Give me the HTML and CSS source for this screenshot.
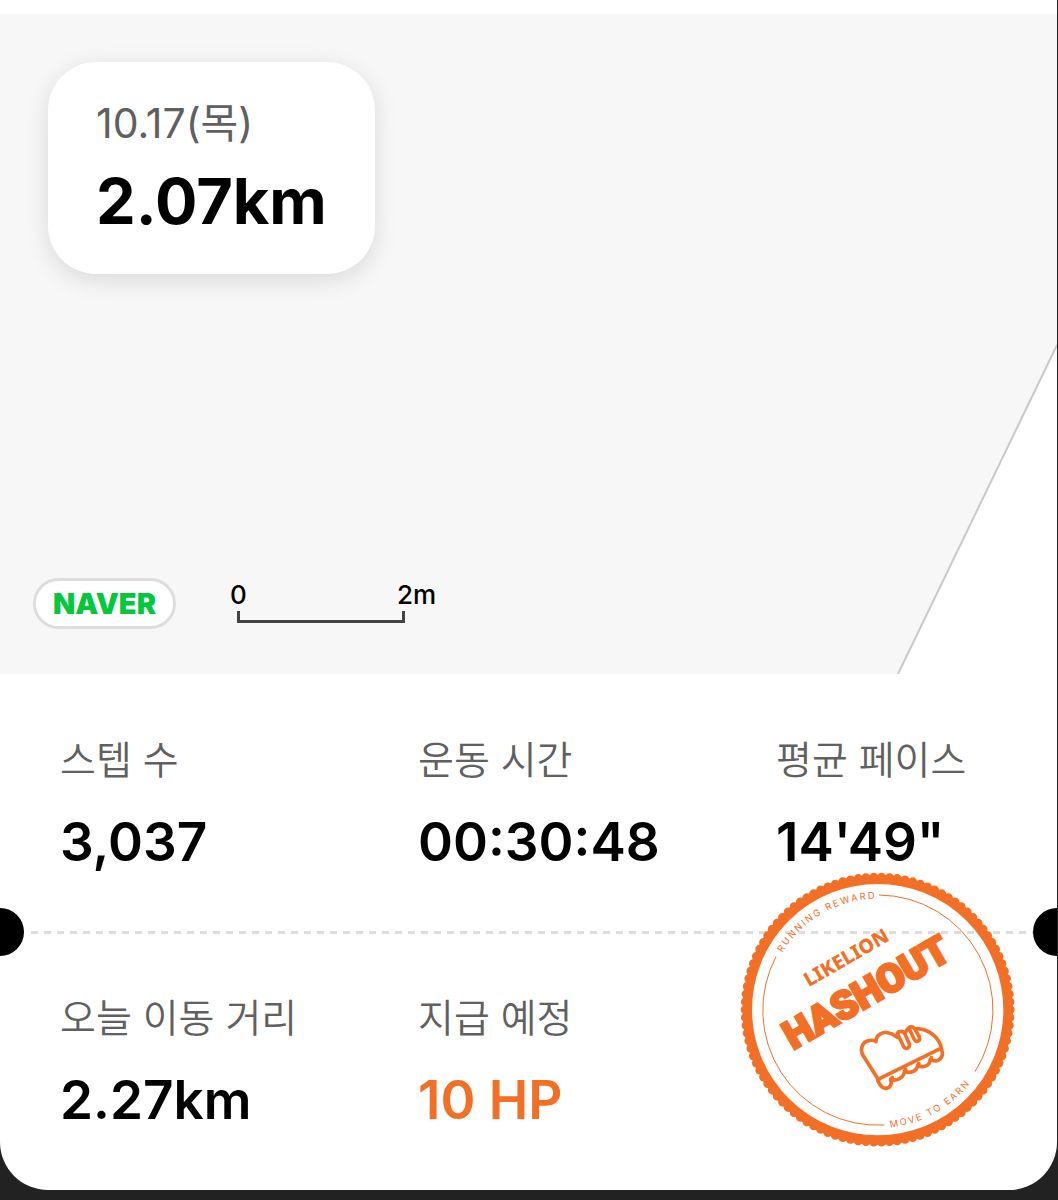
FILE: index.html
```html
<!DOCTYPE html>
<html lang="ko">
<head>
<meta charset="utf-8">
<meta name="viewport" content="width=device-width, initial-scale=1">
<title>10.17(목) 2.07km</title>
<link rel="stylesheet" href="styles.css">
</head>
<body>
<main class="ticket">
  <section class="map">
    <svg class="map-land" viewBox="0 0 160 330" aria-hidden="true">
      <path d="M1 330 160 1V330Z" fill="#fff"/>
      <path d="M1 330 160 1" fill="none" stroke="#cbc8c5" stroke-width="2"/>
    </svg>
    <header class="summary">
      <p class="summary-date">10.17(목)</p>
      <h1 class="summary-distance">2.07km</h1>
    </header>
    <footer class="map-legend">
      <span class="naver">NAVER</span>
      <div class="scale">
        <div class="scale-labels"><span>0</span><span class="scale-end">2m</span></div>
        <div class="scale-bar"></div>
      </div>
    </footer>
  </section>

  <dl class="stats">
    <div class="stat"><dt>스텝 수</dt><dd>3,037</dd></div>
    <div class="stat"><dt>운동 시간</dt><dd>00:30:48</dd></div>
    <div class="stat"><dt>평균 페이스</dt><dd>14'49"</dd></div>
  </dl>

  <div class="perforation"><span class="notch"></span><span class="dashes"></span><span class="notch notch-right"></span></div>

  <section class="reward">
    <dl class="stats stats-reward">
      <div class="stat"><dt>오늘 이동 거리</dt><dd>2.27km</dd></div>
      <div class="stat"><dt>지급 예정</dt><dd class="points">10 HP</dd></div>
    </dl>
    <svg class="stamp" viewBox="0 0 900 900" role="img" aria-label="LIKELION HASHOUT">
      <defs>
        <path id="arc-top" d="M110 449A333 333 0 0 1 776 449"/>
        <path id="arc-bottom" d="M88 449A355 355 0 0 0 798 449"/>
      </defs>
      <g fill="none" stroke="#f36f25">
        <circle cx="443" cy="449" r="391" stroke-width="28"/>
        <circle cx="443" cy="449" r="398" stroke-width="26" stroke-linecap="round" pathLength="106" stroke-dasharray="0 1"/>
        <path d="M447 105A345 345 0 0 1 735 635M463 795A345 345 0 0 1 138 290" stroke-width="3"/>
      </g>
      <g class="stamp-small">
        <text><textPath href="#arc-top" startOffset="179">RUNNING REWARD</textPath></text>
        <text><textPath href="#arc-bottom" startOffset="595">MOVE TO EARN</textPath></text>
      </g>
      <text class="stamp-brand" transform="translate(236 382) rotate(-30)">LIKELION</text>
      <text class="stamp-title" transform="translate(189 571) rotate(-30)">HASHOUT</text>
      <g fill="none" stroke="#f36f25" stroke-width="11" stroke-linecap="round" stroke-linejoin="round">
        <path d="M446 660 400 588C388 568 397 546 416 542C424 540 432 540 438 545C437 524 458 514 476 519C490 521 495 529 502 532"/>
        <path d="M561 506C601 508 631 537 635 570C643 590 626 611 601 599C598 620 576 624 563 616C559 637 536 641 524 633C521 653 502 665 482 658C487 674 480 684 466 685C454 685 449 673 443 661M450 655 626 568"/>
        <path d="M482 658Q487 656 487 652M524 633Q527 631 527 627M563 616Q566 614 566 610M601 599Q604 597 604 593"/>
        <path d="M502 520 520 558C527 573 544 562 537 549L525 523C519 509 498 514 503 524M537 505 551 535C559 552 573 543 567 529L554 506C547 496 531 501 537 510M525 522C528 512 533 506 537 505"/>
      </g>
    </svg>
  </section>
</main>
</body>
</html>
```
FILE: styles.css
```css
* { box-sizing: border-box; }
body {
  margin: 0;
  padding: 0 1px 10px 0;
  background: #222;
  color: #000;
  font-family: Inter, "Noto Sans CJK KR", sans-serif;
}
p, h1, dl, dd { margin: 0; }
.ticket {
  padding-top: 14px;
  overflow: hidden;
  background: #fff;
  border-radius: 0 0 48px 48px;
}
.map {
  position: relative;
  display: flex;
  flex-direction: column;
  align-items: flex-start;
  justify-content: space-between;
  min-height: 660px;
  padding: 48px 48px 45px 33px;
  background: #f7f7f7;
}
.map-land {
  position: absolute;
  right: 0;
  bottom: 0;
  width: 160px;
  height: 330px;
}
.summary {
  margin-left: 15px;
  padding: 37px 48px 35px;
  background: #fff;
  border-radius: 48px;
  box-shadow: 0 6px 24px rgba(0, 0, 0, .12);
}
.summary-date {
  color: #606060;
  font-size: 41px;
  font-weight: 370;
  line-height: 48px;
}
.summary-distance {
  margin: 16px 0 0;
  font-size: 63px;
  font-weight: 700;
  line-height: 76px;
}
.map-legend {
  display: flex;
  align-items: flex-start;
  gap: 54px;
}
.naver {
  padding: 0 17px;
  border: 3px solid #ddd;
  border-radius: 26px;
  background: #fff;
  color: #03c73c;
  font-size: 29px;
  font-weight: 900;
  line-height: 45px;
}
.scale-labels {
  display: flex;
  justify-content: space-between;
  width: 206px;
  font-size: 26px;
  font-weight: 500;
  line-height: 33px;
}
.scale-bar {
  width: 168px;
  height: 12px;
  margin-left: 7px;
  border: solid #444;
  border-width: 0 3px 3px;
}
.stats {
  display: grid;
  grid-template-columns: 358fr 358fr 221fr;
  padding: 56px 60px 34px;
}
.stat dt {
  color: #606060;
  font-size: 39px;
  font-weight: 350;
  line-height: 60px;
  white-space: nowrap;
}
.stat dd {
  margin-top: 20px;
  font-size: 53px;
  font-weight: 600;
  line-height: 64px;
}
.stat .points { color: #f36f25; }
.perforation {
  display: flex;
  align-items: center;
  justify-content: space-between;
  gap: 7px;
}
.notch {
  width: 24px;
  height: 48px;
  border-radius: 0 24px 24px 0;
  background: #000;
}
.notch-right { border-radius: 24px 0 0 24px; }
.dashes {
  flex: 1;
  height: 3px;
  margin-right: -7px;
  background: repeating-linear-gradient(90deg, #ddd 0 7px, transparent 7px 13px);
}
.reward { position: relative; }
.stats-reward { padding: 32px 60px 58px; }
.stamp {
  position: absolute;
  right: 27px;
  bottom: 30px;
  width: 300px;
  height: 300px;
}
.stamp text { fill: #f36f25; }
.stamp-small {
  font-family: Inter, sans-serif;
  font-size: 28px;
  letter-spacing: 6px;
}
.stamp-brand {
  font-family: "Noto Sans", sans-serif;
  font-size: 59px;
  font-weight: 800;
}
.stamp-title {
  font-family: Roboto, sans-serif;
  font-size: 118px;
  font-weight: 900;
  stroke: #f36f25;
  stroke-width: 8px;
}
```
